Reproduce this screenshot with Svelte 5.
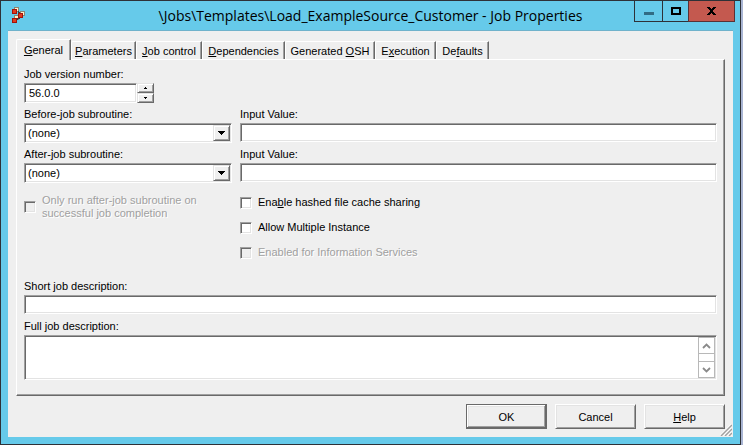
<script>
  const tabs = [
    { pre: '', key: 'G', post: 'eneral', width: 55 },
    { pre: '', key: 'P', post: 'arameters', width: 65 },
    { pre: '', key: 'J', post: 'ob control', width: 66 },
    { pre: '', key: 'D', post: 'ependencies', width: 83 },
    { pre: 'Generated ', key: 'O', post: 'SH', width: 90 },
    { pre: 'E', key: 'x', post: 'ecution', width: 61 },
    { pre: 'De', key: 'f', post: 'aults', width: 53 }
  ];
  let active = $state(0);
  let version = $state('56.0.0');

  function step(delta) {
    const parts = version.split('.').map(Number);
    parts[0] = Math.max(0, parts[0] + delta);
    version = parts.join('.');
  }
</script>

<div class="window">
  <header>
    <svg class="logo" width="14" height="16" viewBox="0 0 14 16" shape-rendering="crispEdges" aria-hidden="true">
      <path d="M2 0h5v5H2z M8 4h5v5H8z M2 8h5v5H2z" fill="#8d8472" />
      <path d="M3 1h3v3H3z M9 5h3v3H9z M3 9h3v3H3z" fill="#fdf0cb" />
      <path d="M6 4h1v1h1v1H6zM5 11h3v1H6v1H5z" fill="#3c3c40" />
      <path d="M0 2h5v5H0zM6 6h5v5H6zM0 11h5v5H0z" fill="#a31208" />
      <path d="M1 3h3v3H1zM7 7h3v3H7zM1 12h3v3H1z" fill="#e03a1e" />
    </svg>
    <h1>\Jobs\Templates\Load_ExampleSource_Customer - Job Properties</h1>
    <div class="controls">
      <button class="min" aria-label="Minimize">
        <svg width="10" height="9" viewBox="0 0 10 9" shape-rendering="crispEdges"><path d="M0 5h10v3H0z" fill="#316c84" /></svg>
      </button>
      <button class="max" aria-label="Maximize">
        <svg width="10" height="9" viewBox="0 0 10 9" shape-rendering="crispEdges"><path d="M0 0h10v8H0zM2 2v4h6V2z" fill="#000" fill-rule="evenodd" /></svg>
      </button>
      <button class="close" aria-label="Close">
        <svg width="9" height="9" viewBox="0 0 9 9" shape-rendering="crispEdges"><path d="M0 0h3v1h1v1h1V1h1V0h3v1H8v1H7v1H6v2h1v1h1v1h1v1H6V7H5V6H4v1H3v1H0V7h1V6h1V5h1V3H2V2H1V1H0z" fill="#000" /></svg>
      </button>
    </div>
  </header>

  <main>
    <div class="tabs" role="tablist">
      {#each tabs as tab, i}
        <button role="tab" aria-selected={active === i} class:active={active === i} style="width: {tab.width}px" onclick={() => (active = i)}>{tab.pre}<u>{tab.key}</u>{tab.post}</button>
      {/each}
    </div>

    <section class="panel" role="tabpanel">
      <div class="field">
        <label for="version">Job version number:</label>
        <div class="spin">
          <input id="version" type="text" bind:value={version} />
          <div class="arrows">
            <button aria-label="Increase" onclick={() => step(1)}>
              <svg width="3" height="2" viewBox="0 0 3 2" shape-rendering="crispEdges"><path d="M1 0h1v1h1v1H0V1h1z" /></svg>
            </button>
            <button aria-label="Decrease" onclick={() => step(-1)}>
              <svg width="3" height="2" viewBox="0 0 3 2" shape-rendering="crispEdges"><path d="M0 0h3v1H2v1H1V1H0z" /></svg>
            </button>
          </div>
        </div>
      </div>

      {#each ['Before', 'After'] as when}
        <div class="columns">
          <div class="field">
            <label for="{when}-routine">{when}-job subroutine:</label>
            <div class="combo">
              <select id="{when}-routine"><option>(none)</option></select>
              <span class="drop" aria-hidden="true">
                <svg width="7" height="4" viewBox="0 0 7 4" shape-rendering="crispEdges"><path d="M0 0h7v1H6v1H5v1H4v1H3V3H2V2H1V1H0z" /></svg>
              </span>
            </div>
          </div>
          <div class="field">
            <label for="{when}-value">Input Value:</label>
            <input id="{when}-value" type="text" />
          </div>
        </div>
      {/each}

      <div class="columns options">
        <label class="check disabled"><input type="checkbox" disabled /><span>Only run after-job subroutine on<br />successful job completion</span></label>
        <div class="stack">
          <label class="check"><input type="checkbox" /><span>Ena<u>b</u>le hashed file cache sharing</span></label>
          <label class="check"><input type="checkbox" /><span>Allow Multiple Instance</span></label>
          <label class="check disabled"><input type="checkbox" disabled /><span>Enabled for Information Services</span></label>
        </div>
      </div>

      <div class="field">
        <label for="short">Short job description:</label>
        <input id="short" type="text" />
      </div>
      <div class="field">
        <label for="full">Full job description:</label>
        <div class="memo">
          <textarea id="full"></textarea>
          <div class="scroll">
            <button aria-label="Scroll up">
              <svg width="9" height="6" viewBox="0 0 9 6"><path d="M1 5l3.500-3.500L8 5" fill="none" stroke="#8a8a8a" stroke-width="1.800" /></svg>
            </button>
            <button aria-label="Scroll down">
              <svg width="9" height="6" viewBox="0 0 9 6"><path d="M1 1l3.500 3.500L8 1" fill="none" stroke="#8a8a8a" stroke-width="1.800" /></svg>
            </button>
          </div>
        </div>
      </div>
    </section>

    <footer>
      <button class="default">OK</button>
      <button>Cancel</button>
      <button><u>H</u>elp</button>
    </footer>
    <svg class="grip" width="12" height="12" viewBox="0 0 12 12" aria-hidden="true">
      <path d="M1 12L12 1M5 12l7-7M9 12l3-3" stroke="#fff" stroke-width="3" />
      <path d="M1 12L12 1M5 12l7-7M9 12l3-3" stroke="#a0a0a0" stroke-width="1.500" />
    </svg>
  </main>
</div>

<style>
  :global(body) {
    margin: 0;
    padding-right: 2px;
    background: #a9b5d3;
  }
  .window {
    box-sizing: border-box;
    border: 1px solid #2e3137;
    background: #66caea;
    padding: 0 7px 7px;
    color: #000;
    font: 11px/14px "Liberation Sans", Arial, sans-serif;
  }
  button, input, select, textarea {
    box-sizing: border-box;
    margin: 0;
    padding: 0;
    border-radius: 0;
    font: inherit;
    color: inherit;
    appearance: none;
    outline: none;
  }
  svg { display: block; }
  header {
    display: grid;
    grid-template-columns: 1fr auto 1fr;
    height: 29px;
    border-bottom: 1px solid #6fb2cb;
  }
  .logo { margin: 6px 0 0 4px; }
  h1 {
    margin: 0;
    font: 14px/29px "Open Sans", "Noto Sans", sans-serif;
    white-space: nowrap;
  }
  .controls {
    display: flex;
    justify-self: end;
    height: 21px;
    margin-right: -2px;
  }
  .controls button {
    display: flex;
    align-items: center;
    justify-content: center;
    border: solid #2e3137;
    border-width: 0 0 1px 1px;
    background: transparent;
  }
  .controls .min { width: 28px; }
  .controls .max { width: 26px; }
  .controls .close {
    width: 47px;
    border-right-width: 1px;
    border-color: #5a3135;
    background: #c4594f;
  }
  main {
    position: relative;
    padding: 8px;
    background: #efefef;
  }
  .tabs {
    display: flex;
    align-items: flex-end;
    height: 20px;
  }
  .tabs button {
    height: 18px;
    border: solid #fff;
    border-width: 1px 0 0 1px;
    border-right: 1px solid #696969;
    border-top-left-radius: 2px;
    background: #efefef;
    box-shadow: inset -1px 0 #a0a0a0;
    line-height: 16px;
    white-space: nowrap;
  }
  .tabs .active {
    position: relative;
    height: 21px;
    margin-bottom: -1px;
    padding-bottom: 1px;
  }
  .panel {
    display: flex;
    flex-direction: column;
    gap: 4px;
    padding: 7px 7px 15px;
    border: 1px solid;
    border-color: #fff #696969 #696969 #fff;
    box-shadow: inset -1px -1px #a0a0a0;
  }
  .field {
    display: flex;
    flex-direction: column;
    gap: 2px;
  }
  .columns {
    display: grid;
    grid-template-columns: 208px 1fr;
    gap: 8px;
  }
  input, .combo, .memo {
    border: 1px solid;
    border-color: #a0a0a0 #fff #fff #a0a0a0;
    background: #fff;
    box-shadow: inset 1px 1px #696969, inset -1px -1px #e3e3e3;
  }
  input[type="text"] {
    height: 19px;
    margin-bottom: 1px;
    padding: 0 4px;
  }
  .spin {
    display: flex;
    height: 20px;
  }
  .spin input[type="text"] {
    width: 113px;
    height: 20px;
    margin: 0;
  }
  .arrows {
    display: flex;
    flex-direction: column;
    width: 17px;
  }
  .arrows button, .drop {
    display: flex;
    flex: 1;
    align-items: center;
    justify-content: center;
    border: 1px solid;
    border-color: #e3e3e3 #696969 #696969 #e3e3e3;
    background: #efefef;
    box-shadow: inset 1px 1px #fff, inset -1px -1px #a0a0a0;
  }
  .combo {
    display: grid;
    box-sizing: border-box;
    height: 20px;
    padding: 1px;
  }
  .combo select, .drop { grid-area: 1 / 1; }
  .combo select {
    padding-left: 2px;
    border: 0;
    background: transparent;
  }
  .drop {
    justify-self: end;
    box-sizing: border-box;
    width: 17px;
    pointer-events: none;
  }
  .options {
    align-items: start;
    padding: 7px 0 16px;
  }
  .stack {
    display: flex;
    flex-direction: column;
    gap: 12px;
    padding-top: 2px;
  }
  .check {
    display: flex;
    align-items: center;
    gap: 6px;
    line-height: 13px;
  }
  .check input {
    flex: none;
    width: 12px;
    height: 12px;
  }
  .check input:checked { background: #555; }
  .disabled {
    color: #a0a0a0;
    text-shadow: 1px 1px #fff;
  }
  .disabled input { background: #efefef; }
  .memo {
    display: flex;
    box-sizing: border-box;
    height: 45px;
    padding: 1px;
  }
  textarea {
    flex: 1;
    border: 0;
    background: transparent;
    resize: none;
  }
  .scroll {
    display: flex;
    flex-direction: column;
    justify-content: space-between;
    box-sizing: border-box;
    width: 17px;
    border: 1px solid #b8b8b8;
  }
  .scroll button {
    display: flex;
    align-items: center;
    justify-content: center;
    height: 16px;
    border: 0 solid #b8b8b8;
    background: #fff;
  }
  .scroll button:first-child { border-bottom-width: 1px; }
  .scroll button:last-child { border-top-width: 1px; }
  footer {
    display: flex;
    justify-content: flex-end;
    gap: 8px;
    padding-top: 8px;
  }
  footer button {
    width: 81px;
    height: 25px;
    border: 1px solid;
    border-color: #fff #696969 #696969 #fff;
    background: #efefef;
    box-shadow: inset 1px 1px #e3e3e3, inset -1px -1px #a0a0a0;
  }
  footer .default {
    border-color: #696969;
    box-shadow: inset -1px -1px #696969, inset 1px 1px #fff, inset -2px -2px #a0a0a0, inset 2px 2px #e3e3e3;
  }
  .grip {
    position: absolute;
    right: 1px;
    bottom: 1px;
  }
</style>
